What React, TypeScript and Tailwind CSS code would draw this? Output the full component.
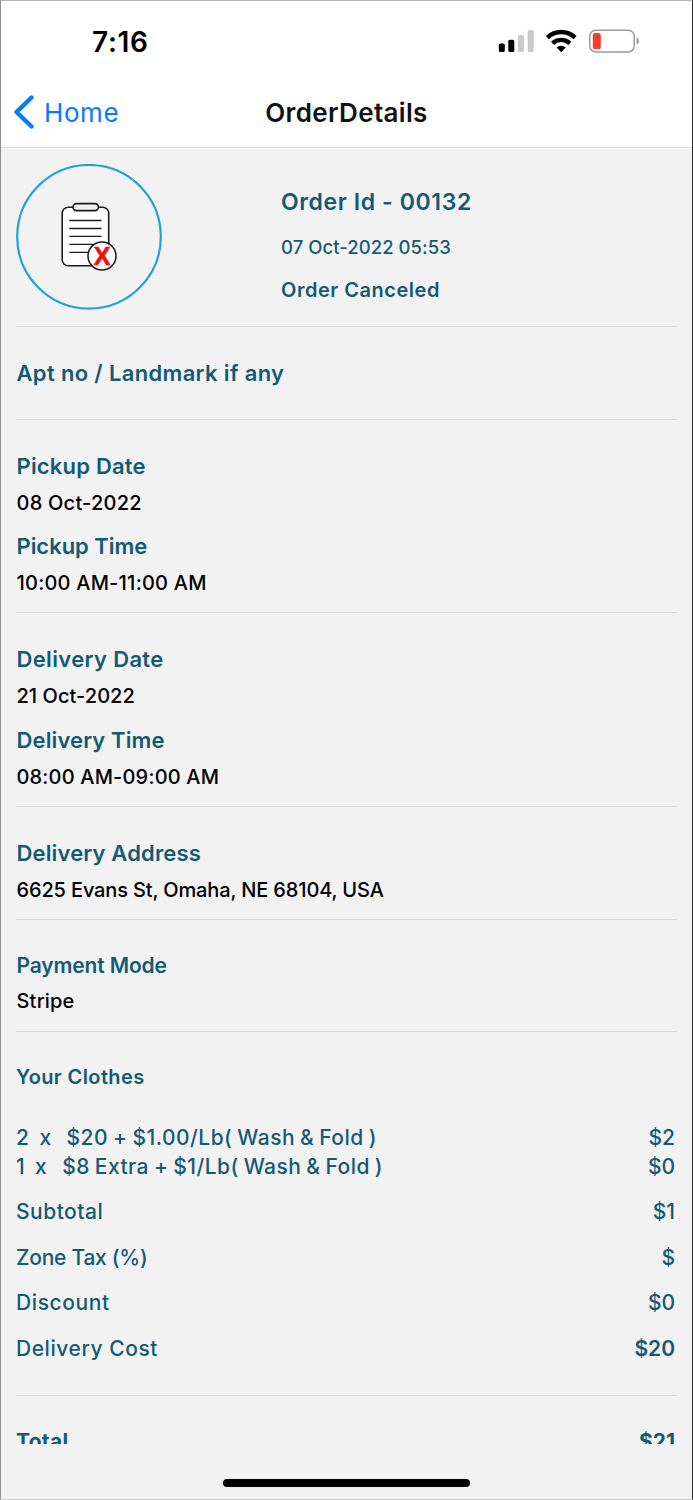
import type { ReactNode } from "react";

function StatusIcons() {
  return (
    <svg width="142" height="26" viewBox="0 0 142 26" fill="none">
      <rect x="0.8" y="14.5" width="6" height="8.5" rx="1.6" fill="#000" />
      <rect x="10.3" y="10.8" width="6" height="12.2" rx="1.6" fill="#000" />
      <rect x="20" y="6" width="6" height="17" rx="1.6" fill="#cacaca" />
      <rect x="29.7" y="1" width="6" height="22" rx="1.6" fill="#cacaca" />
      <g stroke="#000" strokeWidth="4.3">
        <path d="M49.3 8.6a20 20 0 0 1 27.8 0" />
        <path d="M54.5 14.4a12.6 12.6 0 0 1 17.4 0" />
      </g>
      <path d="M63.2 23.2l-4.6-4.6a6.6 6.6 0 0 1 9.2 0z" fill="#000" />
      <rect x="91.8" y="1.3" width="44.4" height="21.6" rx="6" stroke="#9c9c9c" strokeWidth="1.5" />
      <rect x="94.8" y="4" width="8" height="16" rx="2.6" fill="#fb3b30" />
      <path d="M138.6 8.6c2.8 1 2.8 6 0 7z" fill="#8c8c8c" />
    </svg>
  );
}

function CanceledIcon() {
  return (
    <svg width="146" height="146" viewBox="0 0 146 146" fill="none">
      <circle cx="73" cy="72.8" r="71.8" stroke="#1fa3d4" strokeWidth="2.2" />
      <rect x="46.2" y="43.3" width="46.5" height="58.5" rx="6" fill="#fff" stroke="#1c1c1c" strokeWidth="1.6" />
      <rect x="57" y="39.6" width="25.5" height="7" rx="3.5" fill="#f2f2f2" stroke="#1c1c1c" strokeWidth="1.6" />
      <path d="M53.3 56.5h32.3M53.3 64.5h32.3M53.3 72.4h32.3M53.3 80.4h32.3M53.3 88.4h20" stroke="#1c1c1c" strokeWidth="1.4" />
      <circle cx="86" cy="92" r="14" fill="#fff" stroke="#1c1c1c" strokeWidth="1.5" />
      <text
        x="86"
        y="101"
        textAnchor="middle"
        fill="#f60d0d"
        stroke="#f60d0d"
        strokeWidth="0.6"
        className="font-['Liberation_Sans'] text-[25px] font-bold"
      >
        X
      </text>
    </svg>
  );
}

function Heading({ children, className = "text-[22px]" }: { children: ReactNode; className?: string }) {
  return <div className={`h-9 leading-9 font-semibold ${className}`}>{children}</div>;
}

function Value({ children, className = "" }: { children: ReactNode; className?: string }) {
  return <div className={`h-9 text-[20px] leading-9 font-medium text-black ${className}`}>{children}</div>;
}

function Row({ label, price, className = "" }: { label: string; price: ReactNode; className?: string }) {
  return (
    <div className="flex h-[45.4px] items-center justify-between pr-[2px]">
      <span className={className}>{label}</span>
      <span>{price}</span>
    </div>
  );
}

export default function App() {
  return (
    <div className="flex h-[1500px] w-[693px] flex-col overflow-hidden border border-t-[#b5b5b5] border-r-[#2a2a2a] border-b-[#c9c9c9] border-l-[#8e8e8e] bg-[#f2f2f2] font-['Inter',sans-serif] whitespace-pre text-[#155a74]">
      <header className="h-[147px] shrink-0 border-b border-[#dedede] bg-white">
        <div className="flex h-[82px] items-center justify-between pr-[52px] pl-[91px] text-black">
          <span className="text-[28px] font-semibold tracking-[0.7px]">7:16</span>
          <StatusIcons />
        </div>
        <div className="grid h-[58px] grid-cols-3 items-center">
          <div className="flex items-center gap-[10px] pl-[12px] text-[#087aff]">
            <svg width="21" height="34" viewBox="0 0 21 34" fill="none">
              <path d="M18.5 2.5L3.5 17l15 14.5" stroke="currentColor" strokeWidth="4.4" strokeLinecap="round" strokeLinejoin="round" />
            </svg>
            <span className="text-[26px] tracking-[0.6px]">Home</span>
          </div>
          <h1 className="text-center text-[26px] font-semibold tracking-[0.35px] text-[#111]">OrderDetails</h1>
        </div>
      </header>

      <main className="h-[1296px] shrink-0 overflow-hidden px-[15px] pt-[16px]">
        <section className="flex h-[163px] border-b border-[#dadada]">
          <CanceledIcon />
          <div className="pt-[19.5px] pl-[119px]">
            <div className="h-9 text-[23px] leading-9 font-semibold tracking-[0.6px]">Order Id - 00132</div>
            <div className="mt-[9px] h-9 text-[18.5px] leading-9 font-medium tracking-[0.05px]">07 Oct-2022 05:53</div>
            <div className="mt-[7px] h-9 text-[20px] leading-9 font-semibold tracking-[0.52px]">Order Canceled</div>
          </div>
        </section>

        <section className="h-[93px] border-b border-[#dadada] pt-[28px] pl-[0.5px]">
          <Heading className="text-[22px] tracking-[0.34px]">Apt no / Landmark if any</Heading>
        </section>

        <section className="h-[193px] border-b border-[#dadada] pt-[28px] pl-[0.5px]">
          <Heading className="text-[22px] tracking-[0.2px]">Pickup Date</Heading>
          <Value className="mt-[0.6px] tracking-[0.24px]">08 Oct-2022</Value>
          <Heading className="mt-[7.4px] text-[22px] tracking-[-0.04px]">Pickup Time</Heading>
          <Value className="mt-[0.6px] tracking-[0.22px]">10:00 AM-11:00 AM</Value>
        </section>

        <section className="h-[194px] border-b border-[#dadada] pt-[28px] pl-[0.5px]">
          <Heading className="text-[22px] tracking-[0.35px]">Delivery Date</Heading>
          <Value className="mt-px tracking-[0.05px]">21 Oct-2022</Value>
          <Heading className="mt-[8px] text-[22px] tracking-[0.12px]">Delivery Time</Heading>
          <Value className="mt-[0.6px] tracking-[0.18px]">08:00 AM-09:00 AM</Value>
        </section>

        <section className="h-[113px] border-b border-[#dadada] pt-[28px] pl-[0.5px]">
          <Heading className="text-[22px] tracking-[0.15px]">Delivery Address</Heading>
          <Value className="mt-[0.6px] tracking-[-0.15px]">6625 Evans St, Omaha, NE 68104, USA</Value>
        </section>

        <section className="h-[112px] border-b border-[#dadada] pt-[28px] pl-[0.5px]">
          <Heading className="text-[21px] tracking-[-0.14px]">Payment Mode</Heading>
          <Value className="-mt-px tracking-[0.2px]">Stripe</Value>
        </section>

        <section className="h-[364px] border-b border-[#dadada] pt-[27px] text-[21px] font-medium">
          <Heading className="text-[20px] tracking-[0.38px]">Your Clothes</Heading>
          <div className="mt-[28.5px] flex h-[29px] items-center justify-between pr-[2px]">
            <span className="tracking-[0.48px] [word-spacing:-1.1px]">{"2  x   $20 + $1.00/Lb( Wash & Fold )"}</span>
            <span>$2</span>
          </div>
          <div className="flex h-[29px] items-center justify-between pr-[2px]">
            <span className="tracking-[0.46px] [word-spacing:-1.1px]">{"1  x   $8 Extra + $1/Lb( Wash & Fold )"}</span>
            <span>$0</span>
          </div>
          <div className="mt-[8px]">
            <Row label="Subtotal" price="$1" className="tracking-[0.5px]" />
            <Row label="Zone Tax (%)" price="$" className="tracking-[-0.25px]" />
            <Row label="Discount" price="$0" className="tracking-[0.6px]" />
            <Row label="Delivery Cost" price={<b className="font-semibold">$20</b>} className="tracking-[0.56px]" />
          </div>
        </section>

        <section className="flex justify-between pt-[28px] pr-[2px] text-[21px] leading-9 font-bold">
          <span className="tracking-[0.3px]">Total</span>
          <span>$21</span>
        </section>
      </main>

      <div className="mx-auto mt-[34.5px] h-[8px] w-[247px] shrink-0 rounded-full bg-black" />
    </div>
  );
}
